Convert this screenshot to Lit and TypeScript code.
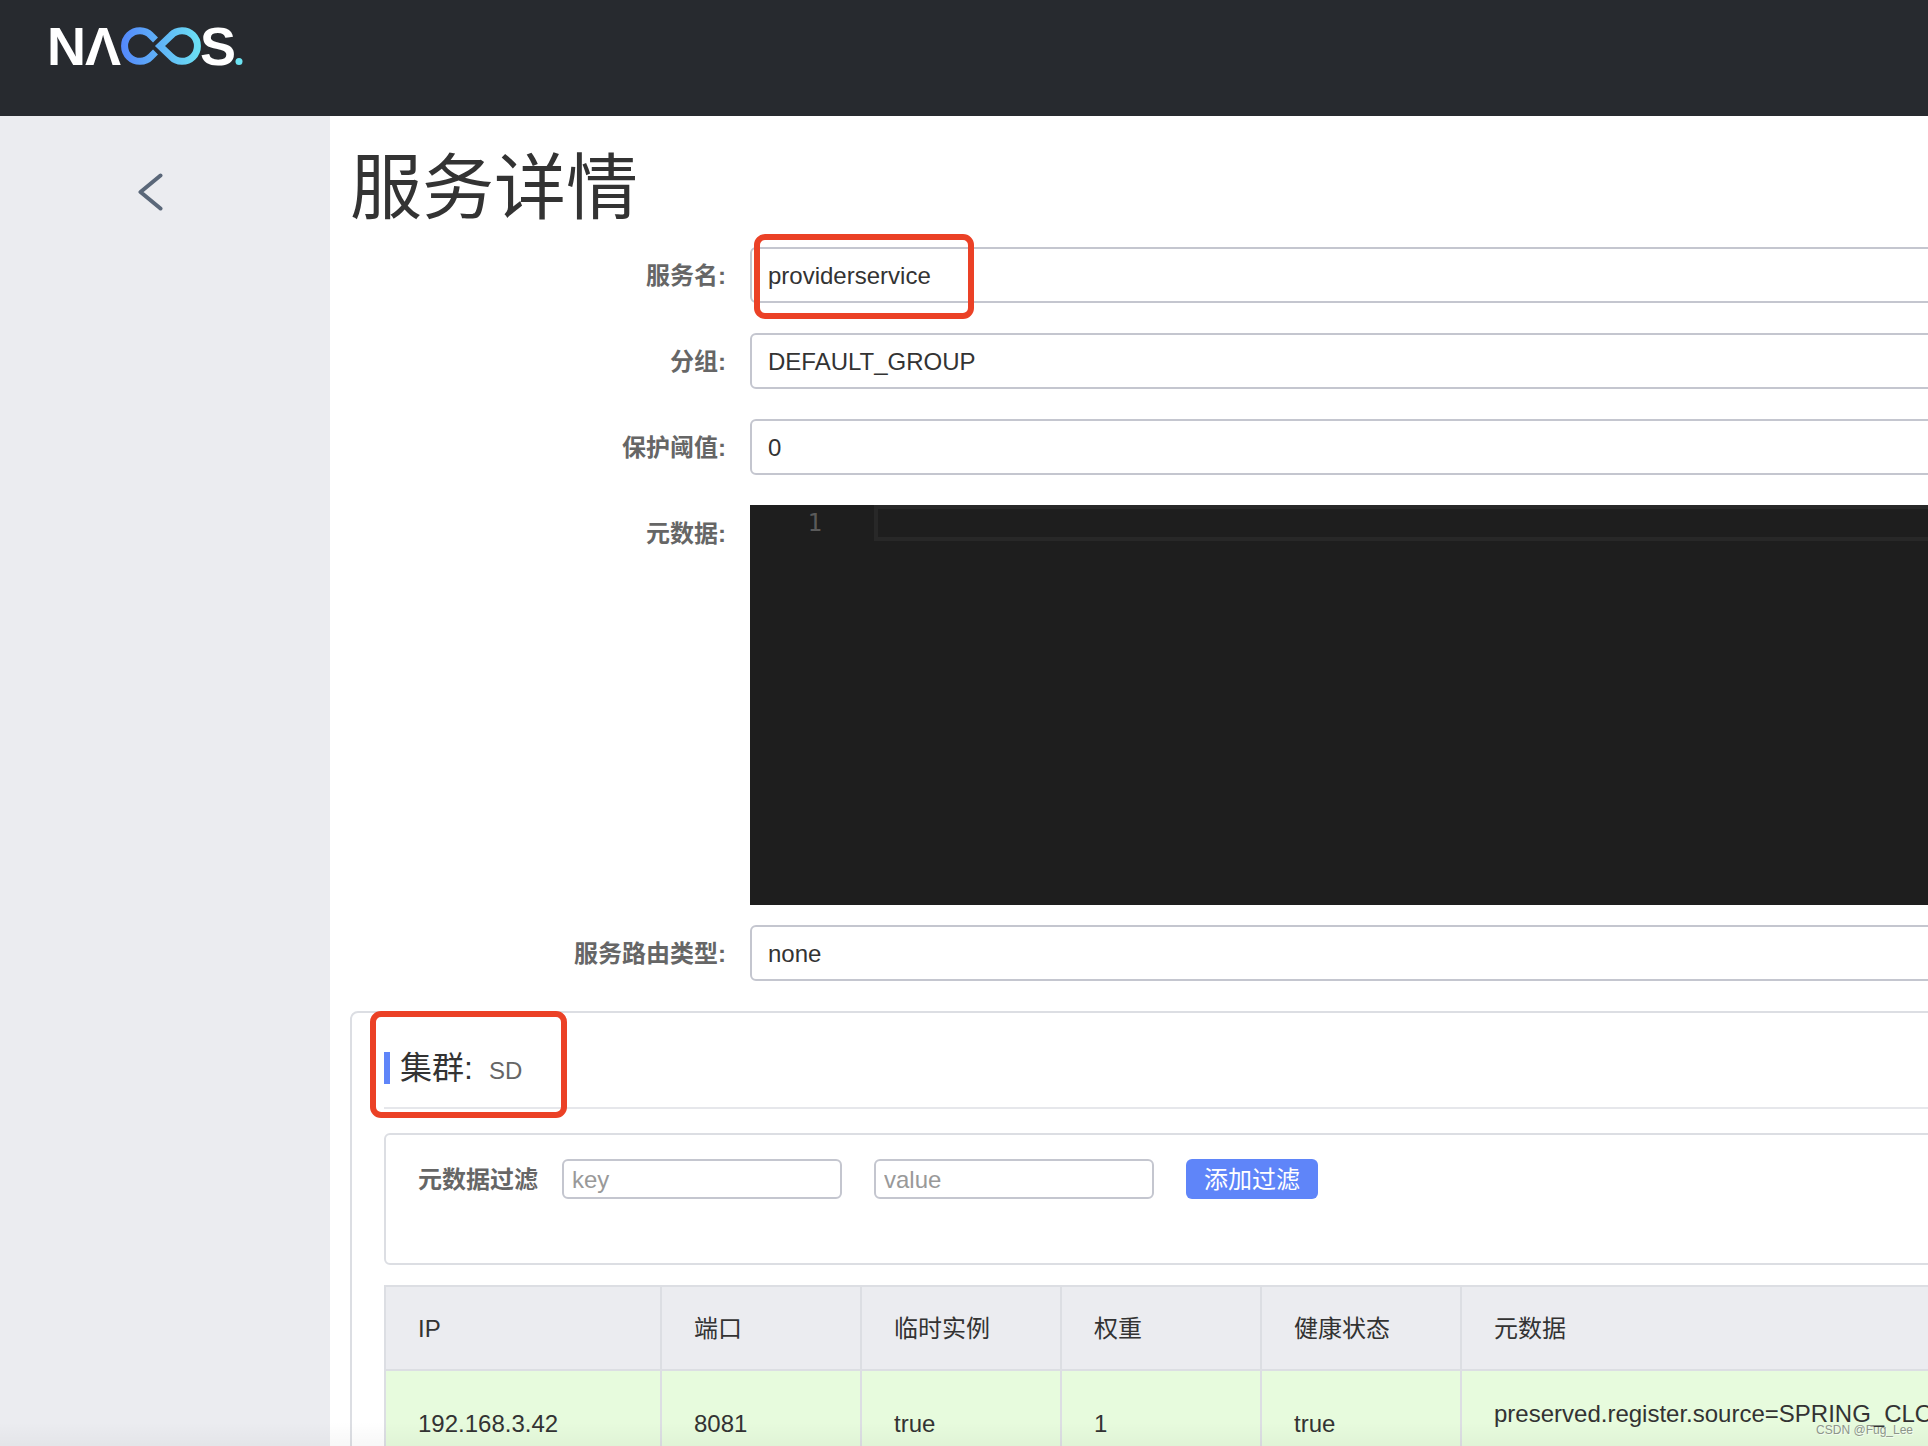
import { LitElement, html, css, svg } from "lit";
import { customElement } from "lit/decorators.js";

const logo = svg`
  <defs>
    <linearGradient id="loop" gradientUnits="userSpaceOnUse" x1="72" y1="0" x2="152" y2="0">
      <stop offset="0" stop-color="#5488fb" />
      <stop offset="1" stop-color="#6ce3f3" />
    </linearGradient>
  </defs>
  <g class="word">
    <text x="-3" y="38">N</text>
    <text x="35" y="38">Λ</text>
    <text x="150" y="38">S</text>
  </g>
  <g fill="none" stroke="url(#loop)" stroke-width="7">
    <path d="M105.500 13 L101 8.500 A15.300 15.300 0 1 0 101 29.500 L105.500 25" />
    <path d="M110 19 L121 8.500 A15.300 15.300 0 1 1 121 29.500 Z" />
  </g>
  <circle cx="189" cy="34.500" r="3.500" fill="#6ce3f3" />
`;

interface Field {
  id: string;
  label: string;
  value: string;
}

const topFields: Field[] = [
  { id: "name", label: "服务名:", value: "providerservice" },
  { id: "group", label: "分组:", value: "DEFAULT_GROUP" },
  { id: "threshold", label: "保护阈值:", value: "0" },
];

const instances = [
  {
    ip: "192.168.3.42",
    port: 8081,
    ephemeral: true,
    weight: 1,
    healthy: true,
    metadata: "preserved.register.source=SPRING_CLOUD",
  },
];

@customElement("app-root")
export class AppRoot extends LitElement {
  static styles = css`
    :host {
      display: flex;
      flex-direction: column;
      position: relative;
      height: 100vh;
      overflow: hidden;
      background: #fff;
      color: #333;
      font: 24px/36px "Liberation Sans", "Noto Sans CJK SC", sans-serif;
    }
    *, *::before, *::after { box-sizing: border-box; }
    input, button { font: inherit; color: inherit; }
    .top {
      flex: none;
      padding: 27px 50px;
      height: 116px;
      background: #272a2f;
    }
    .logo { display: block; width: 192px; height: 38px; overflow: visible; }
    .word { fill: #fff; font: bold 54px "Liberation Sans", sans-serif; }
    .body { display: flex; flex: 1; min-height: 0; }
    .side {
      flex: none;
      width: 330px;
      padding: 57px 138px;
      background: #ebecf0;
    }
    .back {
      display: block;
      padding: 0;
      border: 0;
      background: none;
      line-height: 0;
    }
    .main {
      flex: 1;
      min-width: 0;
      padding-left: 20px;
      overflow: hidden;
    }
    .sheet { width: calc(100% + 120px); }
    h1 {
      margin: 0;
      padding: 22px 0 9px;
      font-size: 72px;
      line-height: 100px;
      font-weight: 400;
    }
    .row {
      display: grid;
      grid-template-columns: 376px 1fr;
      gap: 24px;
      height: 56px;
      margin-bottom: 30px;
    }
    .row.meta { height: auto; margin-bottom: 20px; }
    .row > label {
      color: #666;
      font-weight: 700;
      line-height: 58px;
      text-align: right;
    }
    .control { position: relative; }
    .field {
      display: block;
      width: 100%;
      height: 56px;
      padding: 2px 16px 0;
      border: 2px solid #c4c6cf;
      border-radius: 6px;
      background: #fff;
    }
    .mark {
      position: absolute;
      border: 6px solid #eb4126;
      border-radius: 11px;
      pointer-events: none;
    }
    .mark.service { left: 4px; top: -13px; width: 220px; height: 85px; }
    .mark.group { left: 18px; top: -2px; width: 197px; height: 107px; }
    .editor {
      display: flex;
      height: 400px;
      background: #1e1e1e;
    }
    .gutter {
      width: 124px;
      padding-right: 52px;
      color: #5a5a5a;
      font-family: "DejaVu Sans Mono", monospace;
      text-align: right;
    }
    .code {
      flex: 1;
      height: 36px;
      border: 4px solid #282828;
      border-right: 0;
      background: none;
      resize: none;
      padding: 0 8px;
      outline: none;
      overflow: hidden;
      color: #d4d4d4;
      font: 24px/28px "DejaVu Sans Mono", monospace;
    }
    .card {
      position: relative;
      padding: 0 32px;
      border: 2px solid #dcdee3;
      border-radius: 8px;
    }
    .cluster {
      display: flex;
      align-items: flex-start;
      height: 96px;
      padding-top: 39px;
      border-bottom: 2px solid #e6e7eb;
      margin-bottom: 24px;
    }
    h2 {
      display: flex;
      align-items: baseline;
      gap: 16px;
      height: 32px;
      margin: 0;
      font-size: 32px;
      line-height: 32px;
      font-weight: 400;
      padding-left: 10px;
      border-left: 6px solid #5f85f9;
    }
    .cluster-name { color: #666; font-size: 24px; }
    .filter {
      display: flex;
      align-items: flex-start;
      height: 132px;
      padding: 24px 32px;
      border: 2px solid #dcdee3;
      border-radius: 6px;
      margin-bottom: 20px;
      line-height: 42px;
    }
    .filter label { margin-right: 24px; color: #666; font-weight: 700; }
    .small {
      width: 280px;
      height: 40px;
      margin-right: 32px;
      padding: 2px 8px 0;
      border: 2px solid #c4c6cf;
      border-radius: 6px;
      background: #fff;
    }
    .small::placeholder { color: #999; opacity: 1; }
    .add {
      height: 40px;
      padding: 0 18px;
      border: 0;
      border-radius: 6px;
      background: #5f85f9;
      color: #fff;
      line-height: 42px;
    }
    table {
      width: 100%;
      border-collapse: separate;
      border-spacing: 0;
      table-layout: fixed;
      border-left: 2px solid #dcdee3;
      border-top: 2px solid #dcdee3;
    }
    .c-ip { width: 276px; }
    .c-mid { width: 200px; }
    th, td {
      padding: 2px 32px 0;
      border-right: 2px solid #dcdee3;
      border-bottom: 2px solid #dcdee3;
      text-align: left;
      font-weight: 400;
    }
    th { height: 84px; background: #ebecf0; }
    td { height: 106px; background: #e7fbdd; }
    .stack { padding-bottom: 20px; white-space: nowrap; }
    .fade {
      position: absolute;
      left: 0;
      right: 0;
      bottom: 0;
      height: 24px;
      background: linear-gradient(rgba(0, 0, 0, 0), rgba(0, 0, 0, 0.03));
      pointer-events: none;
    }
    .credit {
      position: absolute;
      right: 15px;
      bottom: 7px;
      color: #8d958b;
      font-size: 12px;
      line-height: 18px;
      text-shadow: 1px 1px 0 rgba(255, 255, 255, 0.6);
    }
  `;

  private row(f: Field, marked = false) {
    return html`
      <div class="row">
        <label for=${f.id}>${f.label}</label>
        <div class="control">
          <input class="field" id=${f.id} .value=${f.value} readonly />
          ${marked ? html`<span class="mark service"></span>` : null}
        </div>
      </div>
    `;
  }

  render() {
    return html`
      <header class="top">
        <svg class="logo" viewBox="0 0 192 38" role="img" aria-label="NACOS">${logo}</svg>
      </header>
      <div class="body">
        <nav class="side">
          <button class="back" aria-label="返回">
            <svg width="25" height="38" viewBox="0 0 25 38" fill="none" stroke="#5a6779"
              stroke-width="4" stroke-linecap="round" stroke-linejoin="round">
              <path d="M22.500 2.500 L2.500 19 L22.500 35.500" />
            </svg>
          </button>
        </nav>
        <main class="main">
          <div class="sheet">
            <h1>服务详情</h1>
            ${topFields.map((f, i) => this.row(f, i === 0))}
            <div class="row meta">
              <label for="metadata">元数据:</label>
              <div class="editor">
                <span class="gutter">1</span>
                <textarea class="code" id="metadata" readonly></textarea>
              </div>
            </div>
            ${this.row({ id: "selector", label: "服务路由类型:", value: "none" })}
            <section class="card">
              <div class="cluster">
                <h2>集群: <span class="cluster-name">SD</span></h2>
              </div>
              <span class="mark group"></span>
              <div class="filter">
                <label for="key">元数据过滤</label>
                <input class="small" id="key" placeholder="key" />
                <input class="small" placeholder="value" aria-label="value" />
                <button class="add">添加过滤</button>
              </div>
              <table>
                <colgroup>
                  <col class="c-ip" />
                  <col class="c-mid" />
                  <col class="c-mid" />
                  <col class="c-mid" />
                  <col class="c-mid" />
                  <col />
                </colgroup>
                <thead>
                  <tr>
                    <th>IP</th>
                    <th>端口</th>
                    <th>临时实例</th>
                    <th>权重</th>
                    <th>健康状态</th>
                    <th>元数据</th>
                  </tr>
                </thead>
                <tbody>
                  ${instances.map(
                    (n) => html`
                      <tr>
                        <td>${n.ip}</td>
                        <td>${n.port}</td>
                        <td>${String(n.ephemeral)}</td>
                        <td>${n.weight}</td>
                        <td>${String(n.healthy)}</td>
                        <td><div class="stack">${n.metadata}</div></td>
                      </tr>
                    `
                  )}
                </tbody>
              </table>
            </section>
          </div>
        </main>
      </div>
      <div class="fade"></div>
      <div class="credit">CSDN @Fug_Lee</div>
    `;
  }
}
